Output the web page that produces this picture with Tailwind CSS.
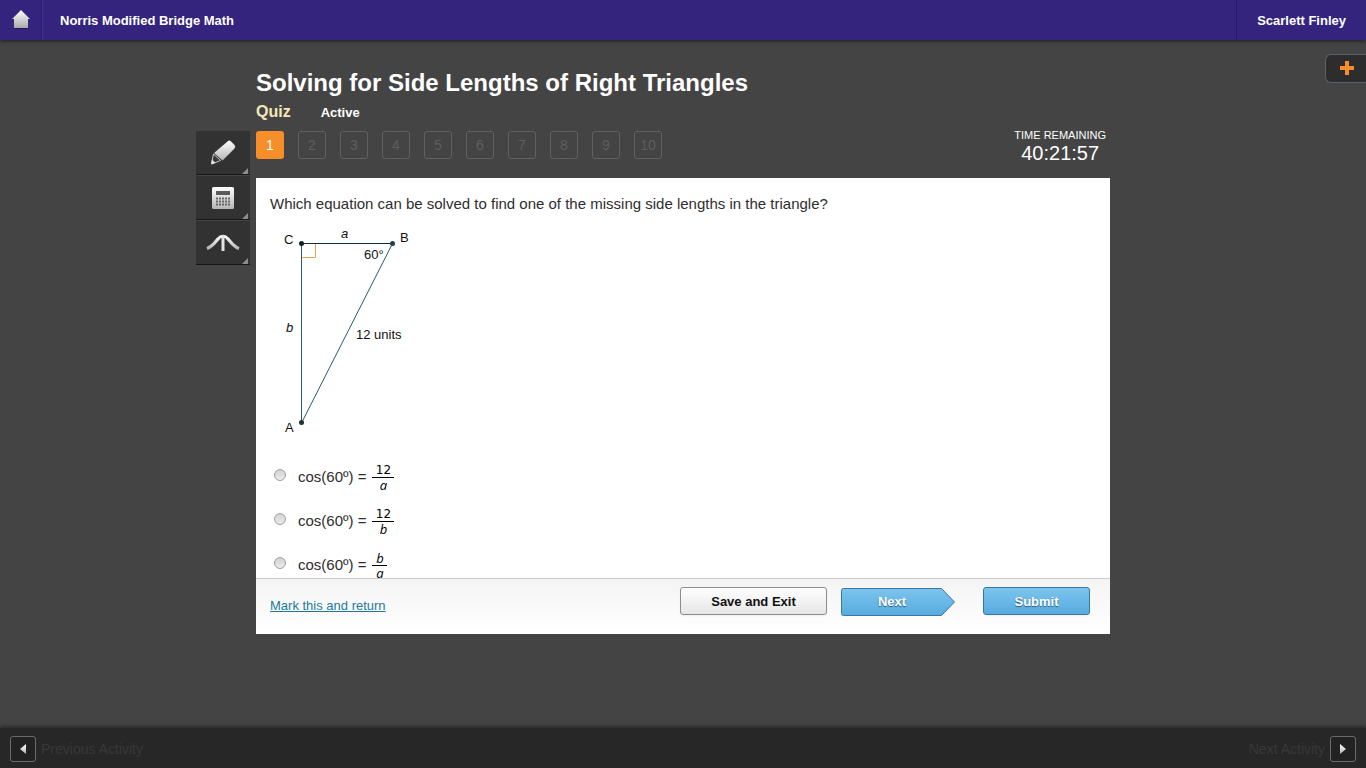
<!DOCTYPE html>
<html lang="en">
<head>
    <meta charset="UTF-8">
    <meta name="viewport" content="width=device-width, initial-scale=1.0">
    <title>Solving for Side Lengths of Right Triangles</title>
    <script src="https://cdn.jsdelivr.net/npm/@tailwindcss/browser@4"></script>
</head>
<body class="relative flex h-screen flex-col overflow-hidden bg-[#444444] font-['Liberation_Sans',Arial,sans-serif] text-white">

<!-- Top bar -->
<header class="flex h-10 shrink-0 items-stretch bg-[#35247e] text-[13px] font-bold shadow-[0_1px_4px_rgba(0,0,0,0.6)]">
    <a href="#" aria-label="Home" class="flex w-[42px] items-center justify-center border-r border-[#291b68]">
        <svg width="18" height="20" viewBox="0 0 18 20">
            <defs>
                <linearGradient id="home" x1="0" y1="0" x2="0" y2="1">
                    <stop offset="0" stop-color="#ffffff"/>
                    <stop offset="1" stop-color="#a9a9a9"/>
                </linearGradient>
            </defs>
            <path d="M9 0 L18 9 H16 V18 H2 V9 H0 Z" fill="url(#home)"/>
            <path d="M2 18.5 H16" stroke="#22164f"/>
        </svg>
    </a>
    <div class="flex flex-1 items-center border-l border-[#43338c] pt-[2px] pl-[17px]">Norris Modified Bridge Math</div>
    <a href="#" class="flex items-center border-l border-[#291b68] px-5 pt-[2px]">Scarlett Finley</a>
</header>

<!-- Side tab -->
<button aria-label="Add" class="absolute top-[54px] right-0 flex h-[29px] w-[41px] items-center justify-center rounded-l-md border border-r-0 border-[#59626a] bg-[#2d2d2d] pb-px pl-px">
    <svg width="14" height="14" viewBox="0 0 14 14" fill="#f68e2f"><path d="M5 0h4v5h5v4H9v5H5V9H0V5h5z"/></svg>
</button>

<main class="mx-auto grid min-h-0 w-full max-w-[974px] flex-1 grid-cols-[54px_1fr_54px] grid-rows-[auto_minmax(0,1fr)] gap-x-[6px] pt-7 pb-[94px]">
    <div class="col-start-2 pb-2">
        <h1 class="text-2xl leading-[30px] font-bold">Solving for Side Lengths of Right Triangles</h1>
        <div class="flex items-baseline gap-[30px] pt-1 leading-5 font-bold">
            <h2 class="text-base leading-5 text-[#f5e6b8]">Quiz</h2>
            <span class="text-[13px]">Active</span>
        </div>
    </div>

    <!-- Tools -->
    <nav class="col-start-1 row-start-2 flex flex-col gap-px">
        <button aria-label="Highlighter" class="relative flex h-11 items-center justify-center border-b border-[#161616] bg-[#323232]">
            <svg width="26" height="26" viewBox="0 0 26 26">
                <defs>
                    <linearGradient id="metal" x1="0" y1="0" x2="0" y2="1">
                        <stop offset="0" stop-color="#ffffff"/>
                        <stop offset="1" stop-color="#b5b5b5"/>
                    </linearGradient>
                </defs>
                <path d="M17.500 1.500 Q19 0 20.500 1 L24.500 5 Q26 6.500 24.500 8.500 L12.500 20.500 L4 13 Z" fill="url(#metal)"/>
                <path d="M3.500 14 L10.500 20.500 L2 24 L1.500 23.500 Z" fill="#383838" stroke="#c9c9c9"/>
                <path d="M1 24.500 L2 19.500 L5.500 22.800 Z" fill="#e2e2e2"/>
            </svg>
            <svg class="absolute right-[2px] bottom-0" width="6" height="6" viewBox="0 0 6 6"><path d="M6 0V6H0z" fill="#8c8c8c"/></svg>
        </button>
        <button aria-label="Calculator" class="relative flex h-11 items-center justify-center border-b border-[#161616] bg-[#323232]">
            <svg width="22" height="22" viewBox="0 0 22 22">
                <rect width="22" height="22" rx="1.500" fill="url(#metal)"/>
                <rect x="4" y="4" width="14" height="4" fill="#5a5a5a"/>
                <path d="M4 11.500h14M4 14.500h14M4 17.500h14" stroke="#666666" stroke-width="2" stroke-dasharray="2 1"/>
            </svg>
            <svg class="absolute right-[2px] bottom-0" width="6" height="6" viewBox="0 0 6 6"><path d="M6 0V6H0z" fill="#8c8c8c"/></svg>
        </button>
        <button aria-label="Graph" class="relative flex h-11 items-center justify-center border-b border-[#161616] bg-[#323232]">
            <svg width="34" height="18" viewBox="0 0 34 18">
                <path d="M1 14.500 C7 12.500 9.500 7.500 12 5 Q17 -.5 22 5 C24.500 7.500 27 12.500 33 14.500" fill="none" stroke="url(#metal)" stroke-width="3.200"/>
                <path d="M14.500 4.500v12M19.500 4.500v12" stroke="#323232"/>
                <path d="M15.500 1h3v16h-3z" fill="#e2e2e2"/>
            </svg>
            <svg class="absolute right-[2px] bottom-0" width="6" height="6" viewBox="0 0 6 6"><path d="M6 0V6H0z" fill="#8c8c8c"/></svg>
        </button>
    </nav>

    <div class="col-start-2 row-start-2 flex min-h-0 flex-col">
        <!-- Question numbers and timer -->
        <div class="flex h-[47px] shrink-0 items-start justify-between">
            <ol class="flex gap-[14px] text-sm text-[#5e5e5e]">
                <li><button class="size-7 rounded-[3px] bg-[#f68e2a] text-white">1</button></li>
                <li><button class="size-7 rounded-[3px] border border-[#606060]">2</button></li>
                <li><button class="size-7 rounded-[3px] border border-[#606060]">3</button></li>
                <li><button class="size-7 rounded-[3px] border border-[#606060]">4</button></li>
                <li><button class="size-7 rounded-[3px] border border-[#606060]">5</button></li>
                <li><button class="size-7 rounded-[3px] border border-[#606060]">6</button></li>
                <li><button class="size-7 rounded-[3px] border border-[#606060]">7</button></li>
                <li><button class="size-7 rounded-[3px] border border-[#606060]">8</button></li>
                <li><button class="size-7 rounded-[3px] border border-[#606060]">9</button></li>
                <li><button class="size-7 rounded-[3px] border border-[#606060]">10</button></li>
            </ol>
            <div class="pr-1 text-center">
                <div class="text-[11px] leading-2">TIME REMAINING</div>
                <div class="text-xl leading-7">40:21:57</div>
            </div>
        </div>

        <!-- Question -->
        <section class="flex min-h-0 flex-1 flex-col bg-white text-[15px] text-[#2e2e2e]">
            <div class="min-h-0 flex-1 overflow-y-auto px-[14px] pt-4 [scrollbar-width:none]">
                <p class="leading-5">Which equation can be solved to find one of the missing side lengths in the triangle?</p>

                <svg class="mt-3 block" width="160" height="216" viewBox="0 0 160 216" font-size="13" fill="#111111">
                    <path d="M32 31.500H45.500V18" fill="none" stroke="#e5a54c"/>
                    <path d="M31.500 17.500V197L122.500 17.500" fill="none" stroke="#2c5c60"/>
                    <path d="M31 17.500H123" stroke="#0c2e30"/>
                    <circle cx="31.500" cy="17.500" r="2.500" fill="#0d2426"/>
                    <circle cx="122.500" cy="17.500" r="2.500" fill="#1d4144"/>
                    <circle cx="31.500" cy="196.500" r="2.500" fill="#1d3235"/>
                    <text x="14" y="18">C</text>
                    <text x="130" y="16">B</text>
                    <text x="15" y="206">A</text>
                    <text x="71" y="12" font-style="italic">a</text>
                    <text x="16" y="106" font-style="italic">b</text>
                    <text x="94" y="33">60°</text>
                    <text x="86" y="113">12 units</text>
                </svg>

                <div class="flex flex-col gap-3 pt-[19px] pb-5">
                    <label class="flex h-8 items-center">
                        <input type="radio" name="answer" class="mb-1 ml-1 size-3 appearance-none rounded-full border border-[#a0a0a0] bg-linear-to-b from-[#d2d2d2] to-[#ececec] checked:bg-[#555555]">
                        <span class="pl-3">cos(60º) =</span>
                        <span class="ml-[6px] flex w-[22px] flex-col text-center font-['DejaVu_Sans',sans-serif] text-xs leading-[14px] text-black">
                            <span class="border-b border-black">12</span>
                            <i class="font-['Open_Sans',sans-serif] text-[13px] leading-[14px]">a</i>
                        </span>
                    </label>
                    <label class="flex h-8 items-center">
                        <input type="radio" name="answer" class="mb-1 ml-1 size-3 appearance-none rounded-full border border-[#a0a0a0] bg-linear-to-b from-[#d2d2d2] to-[#ececec] checked:bg-[#555555]">
                        <span class="pl-3">cos(60º) =</span>
                        <span class="ml-[6px] flex w-[22px] flex-col text-center font-['DejaVu_Sans',sans-serif] text-xs leading-[14px] text-black">
                            <span class="border-b border-black">12</span>
                            <i class="font-['Open_Sans',sans-serif] text-[13px] leading-[14px]">b</i>
                        </span>
                    </label>
                    <label class="flex h-8 items-center">
                        <input type="radio" name="answer" class="mb-1 ml-1 size-3 appearance-none rounded-full border border-[#a0a0a0] bg-linear-to-b from-[#d2d2d2] to-[#ececec] checked:bg-[#555555]">
                        <span class="pl-3">cos(60º) =</span>
                        <span class="ml-[6px] flex w-[15px] flex-col text-center font-['Open_Sans',sans-serif] text-[13px] leading-[14px] text-black">
                            <i class="border-b border-black">b</i>
                            <i>a</i>
                        </span>
                    </label>
                </div>
            </div>

            <!-- Actions -->
            <footer class="flex h-14 shrink-0 items-start border-t border-[#cccccc] bg-linear-to-b from-[#f4f4f4] to-white pt-2 pr-5 pl-[14px] text-[13px] font-bold">
                <a href="#" class="mt-[9px] mr-auto font-normal text-[#1b7a9c] underline">Mark this and return</a>
                <button class="h-7 w-[147px] rounded-[3px] border border-[#8c8c8c] bg-linear-to-b from-white to-[#e6e6e6] pt-[2px] text-[#111111] shadow-xs">Save and Exit</button>
                <button class="relative mt-px ml-[14px] h-7 w-[114px] pr-3 text-white [text-shadow:0_1px_1px_#2a5b7d]">
                    <svg class="absolute inset-0" width="114" height="28" viewBox="0 0 114 28">
                        <defs>
                            <linearGradient id="next" x1="0" y1="0" x2="0" y2="1">
                                <stop offset="0" stop-color="#7cc5ee"/>
                                <stop offset="1" stop-color="#57abdf"/>
                            </linearGradient>
                        </defs>
                        <path d="M2.500 .5H100.500L113.500 14L100.500 27.500H2.500Q.5 27.500 .5 25.500V2.500Q.5 .5 2.500 .5Z" fill="url(#next)" stroke="#3a77a0"/>
                    </svg>
                    <span class="relative">Next</span>
                </button>
                <button class="ml-7 h-7 w-[107px] rounded-[3px] border border-[#3a77a0] bg-linear-to-b from-[#7cc5ee] to-[#57abdf] pt-[2px] text-white shadow-xs [text-shadow:0_1px_1px_#2a5b7d]">Submit</button>
            </footer>
        </section>
    </div>
</main>

<!-- Activity navigation -->
<footer class="flex h-10 shrink-0 items-center justify-between bg-[#272727] px-[10px] pt-[2px] text-sm text-[#383838] shadow-[0_-1px_4px_rgba(0,0,0,0.5)]">
    <a href="#" class="flex items-center gap-[5px]">
        <span class="flex size-[26px] items-center justify-center rounded-[3px] border border-[#6a6a6a] bg-[#222222]">
            <svg width="6" height="10" viewBox="0 0 6 10"><path d="M6 0V10L0 5z" fill="url(#metal)"/></svg>
        </span>
        Previous Activity
    </a>
    <a href="#" class="flex items-center gap-[5px]">
        Next Activity
        <span class="flex size-[26px] items-center justify-center rounded-[3px] border border-[#6a6a6a] bg-[#222222]">
            <svg width="6" height="10" viewBox="0 0 6 10"><path d="M0 0V10L6 5z" fill="url(#metal)"/></svg>
        </span>
    </a>
</footer>

</body>
</html>
